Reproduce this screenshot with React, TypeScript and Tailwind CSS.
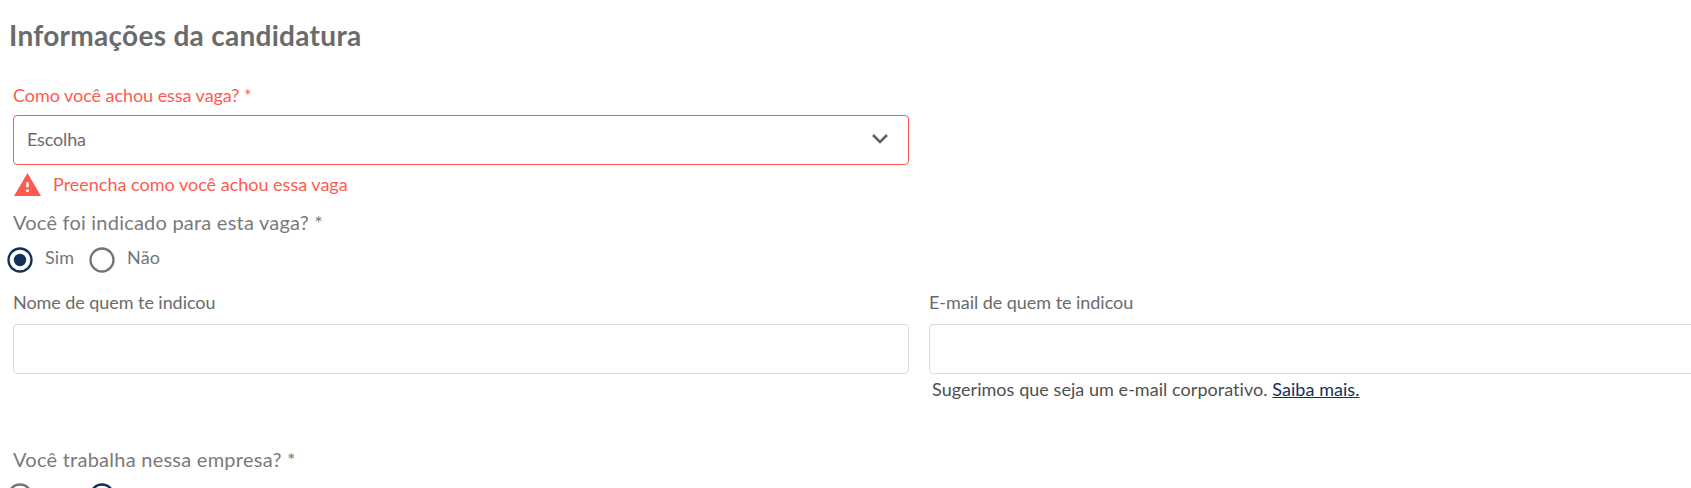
import React from "react";

function Radio({ checked }: { checked?: boolean }) {
  return (
    <svg className={checked ? "size-[26px] shrink-0 text-[#14305a]" : "size-[26px] shrink-0 text-[#757575]"} viewBox="0 0 26 26" fill="none">
      <circle cx="13" cy="13" r="11.5" stroke="currentColor" strokeWidth="2.3" />
      {checked && <circle cx="13" cy="13" r="6.2" fill="currentColor" />}
    </svg>
  );
}

function YesNo({ value, labelClass }: { value: "Sim" | "Não"; labelClass: string }) {
  return (
    <div className="ml-[7px] flex h-[26px] items-center gap-[15px] text-[#757575]">
      {(["Sim", "Não"] as const).map((option) => (
        <label key={option} className="flex h-[26px] items-start gap-3">
          <Radio checked={option === value} />
          <span className={`tracking-[0.1px] ${labelClass}`}>{option}</span>
        </label>
      ))}
    </div>
  );
}

export default function App() {
  return (
    <main className="h-[488px] w-full overflow-hidden bg-white font-['Lato',sans-serif] text-[18px] leading-6 text-[#6b6b6b] [font-variant-ligatures:none]">
      <h1 className="ml-[9px] pt-[17px] text-[28px] font-bold leading-9 tracking-[0.29px]">Informações da candidatura</h1>
      <div className="ml-[13px] w-[896px] pt-[30px] text-[#ff5a4f]">
        <label className="block tracking-[-0.05px]">Como você achou essa vaga? *</label>
        <div className="mt-2 flex h-[50px] items-center justify-between rounded-[4px] border border-[#ff5a4f] pr-[19px] pl-[13px] text-[#6b6b6b]">
          <span className="-mt-0.5 tracking-[-0.15px]">Escolha</span>
          <svg className="-mt-0.5 w-[18px] text-[#616161]" viewBox="0 0 18 12" fill="none"><path d="M2 2l7 7 7-7" stroke="currentColor" strokeWidth="2.5" /></svg>
        </div>
        <p className="mt-[7px] flex h-6 items-center gap-3">
          <svg className="ml-px h-[23px] w-[27px]" viewBox="0 0 27 23"><path d="M13.5 0L27 23H0z" fill="currentColor" /><path d="M13.5 9.2v5M13.5 16.5v2.6" stroke="white" strokeWidth="2.6" /></svg>
          <span className="-mt-px">Preencha como você achou essa vaga</span>
        </p>
      </div>
      <p className="ml-[13px] mt-[14px] mb-[13px] text-[20px] tracking-[0.22px] text-[#7a7a7a]">Você foi indicado para esta vaga? *</p>
      <YesNo value="Sim" labelClass="-mt-[2px]" />
      <div className="ml-[13px] mt-[17px] flex w-[1812px] gap-5">
        <div className="w-[896px]"><label className="tracking-[-0.06px]">Nome de quem te indicou</label><div className="mt-[10px] h-[50px] rounded-[4px] border border-[#dbdbdb]" /></div>
        <div className="w-[896px]"><label className="tracking-[-0.04px]">E-mail de quem te indicou</label><div className="mt-[10px] h-[50px] rounded-[4px] border border-[#dbdbdb]" /><p className="ml-[3px] mt-[3px] tracking-[0.05px] text-[#505050]">Sugerimos que seja um e-mail corporativo. <a className="text-[#14305a] underline">Saiba mais.</a></p></div>
      </div>
      <p className="ml-[13px] mt-[46px] mb-3 text-[20px] tracking-[0.25px] text-[#7a7a7a]">Você trabalha nessa empresa? *</p>
      <YesNo value="Não" labelClass="mt-px" />
    </main>
  );
}
